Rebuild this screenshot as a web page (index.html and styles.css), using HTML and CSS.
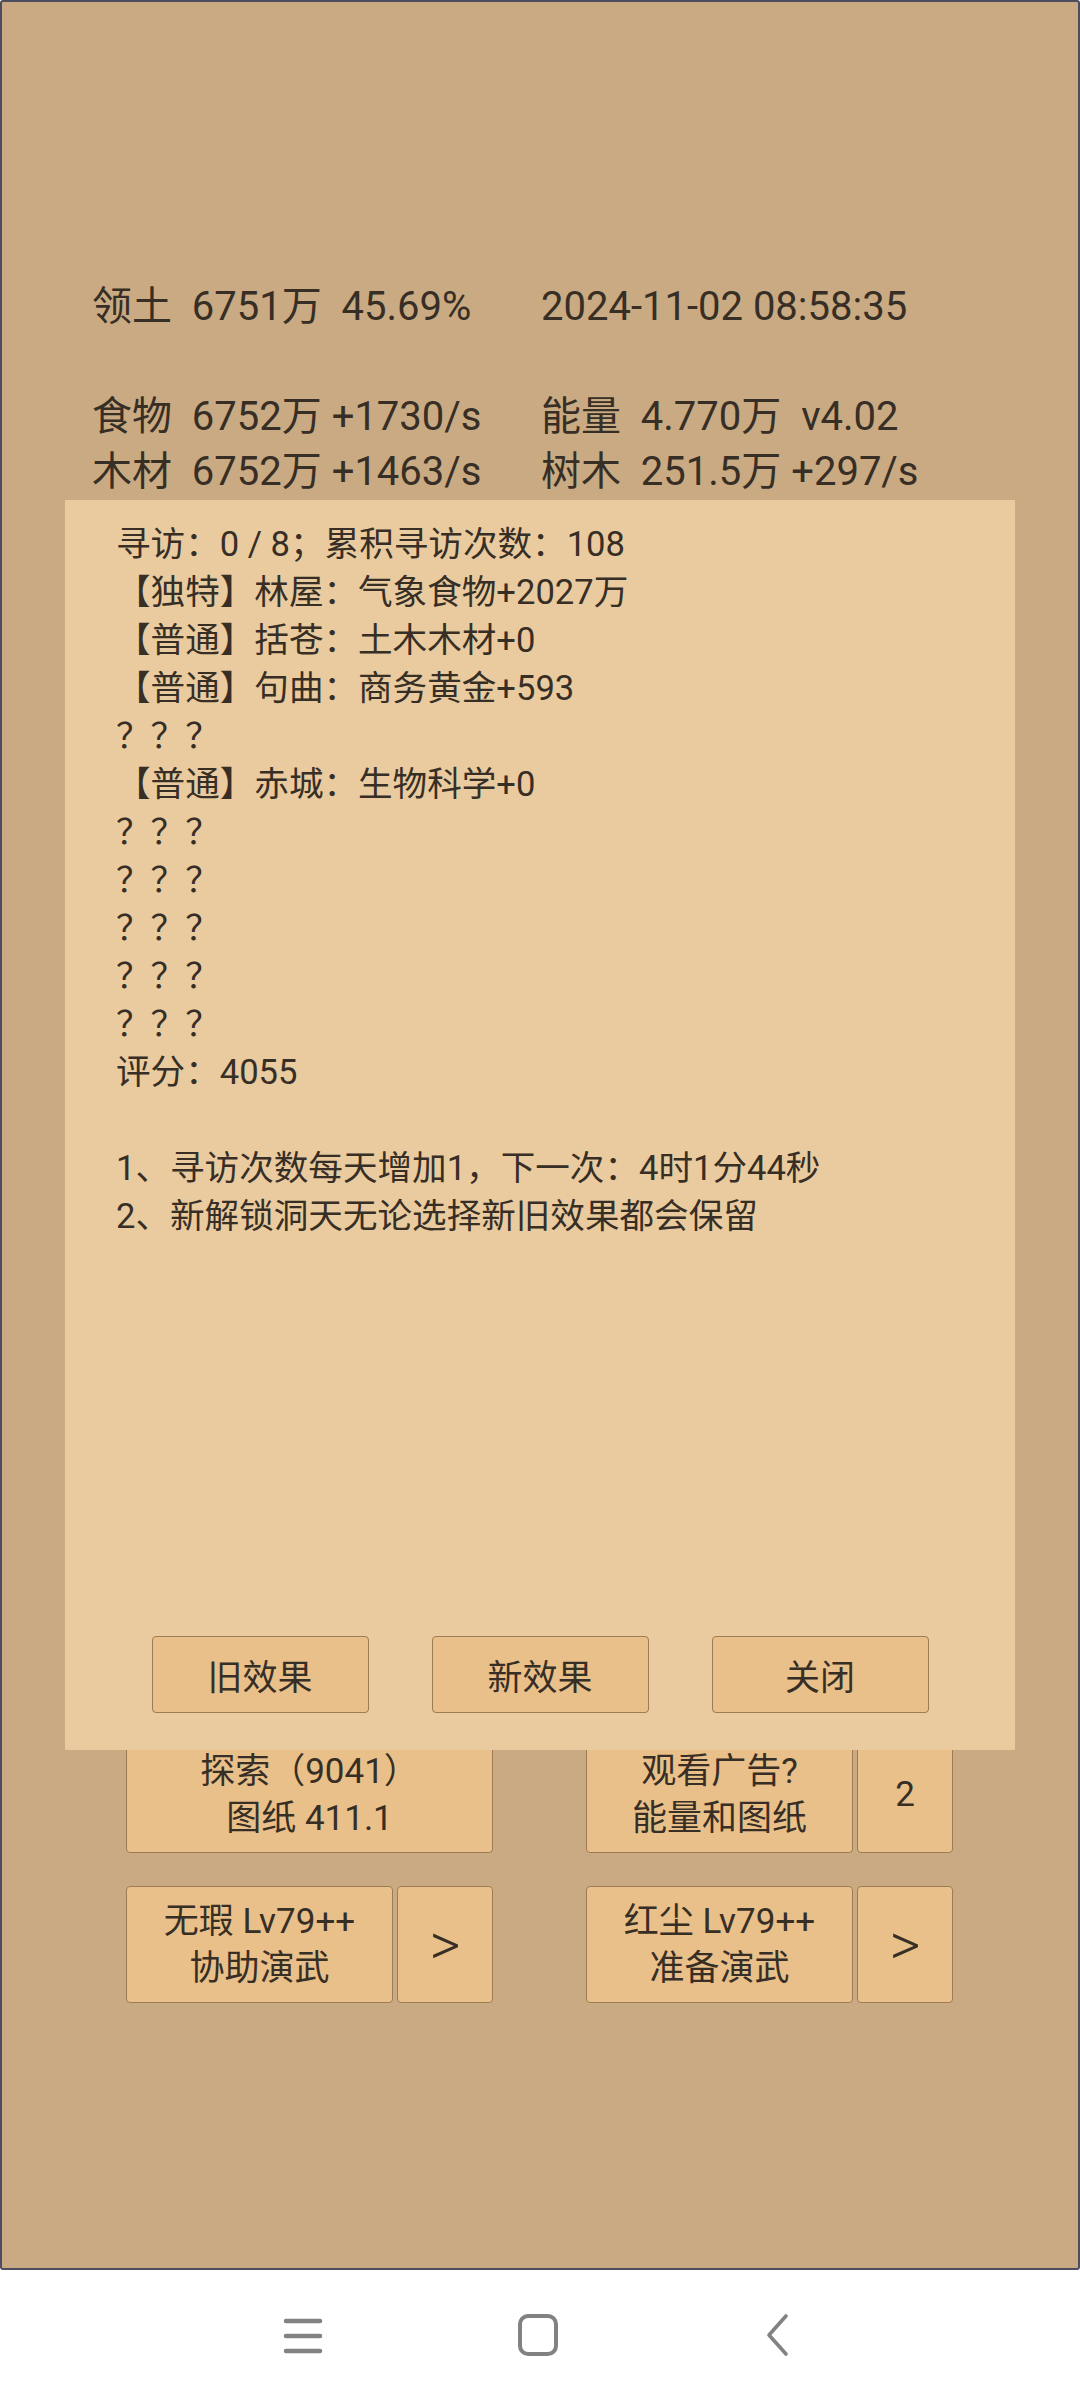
FILE: index.html
```html
<!DOCTYPE html>
<html lang="zh-CN">
<head>
<meta charset="utf-8">
<title>洞天寻访</title>
<link rel="stylesheet" href="styles.css">
</head>
<body>
<div class="screen">
  <div class="stats">
    <div class="cell">领土  6751万  45.69%</div>
    <div class="cell">2024-11-02 08:58:35</div>
    <div class="cell"> </div>
    <div class="cell"> </div>
    <div class="cell">食物  6752万 +1730/s</div>
    <div class="cell">能量  4.770万  v4.02</div>
    <div class="cell">木材  6752万 +1463/s</div>
    <div class="cell">树木  251.5万 +297/s</div>
  </div>

  <div class="actions">
    <div class="group">
      <button class="btn wide">探索（9041）<br>图纸 411.1</button>
    </div>
    <div class="group">
      <button class="btn main">观看广告?<br>能量和图纸</button>
      <button class="btn side">2</button>
    </div>
    <div class="group">
      <button class="btn main">无瑕 Lv79++<br>协助演武</button>
      <button class="btn side arrow">&gt;</button>
    </div>
    <div class="group">
      <button class="btn main">红尘 Lv79++<br>准备演武</button>
      <button class="btn side arrow">&gt;</button>
    </div>
  </div>

  <div class="dialog">
    <div class="dialog-text">寻访：0 / 8；累积寻访次数：108
【独特】林屋：气象食物+2027万
【普通】括苍：土木木材+0
【普通】句曲：商务黄金+593
？？？
【普通】赤城：生物科学+0
？？？
？？？
？？？
？？？
？？？
评分：4055

1、寻访次数每天增加1，下一次：4时1分44秒
2、新解锁洞天无论选择新旧效果都会保留</div>
    <div class="dialog-buttons">
      <button class="dbtn">旧效果</button>
      <button class="dbtn">新效果</button>
      <button class="dbtn">关闭</button>
    </div>
  </div>
</div>

<nav class="navbar">
  <svg class="nav-icon" width="40" height="40" viewBox="0 0 40 40" aria-label="菜单">
    <g stroke="#828282" stroke-width="4.5" stroke-linecap="round">
      <line x1="3" y1="6" x2="37" y2="6"/>
      <line x1="3" y1="21" x2="37" y2="21"/>
      <line x1="3" y1="36" x2="37" y2="36"/>
    </g>
  </svg>
  <svg class="nav-icon" width="44" height="44" viewBox="0 0 44 44" aria-label="主页">
    <rect x="4" y="3" width="36" height="38" rx="8" ry="8" fill="none" stroke="#828282" stroke-width="4"/>
  </svg>
  <svg class="nav-icon" width="30" height="44" viewBox="0 0 30 44" aria-label="返回">
    <polyline points="25,3 8,22 25,41" fill="none" stroke="#828282" stroke-width="3.6" stroke-linecap="round" stroke-linejoin="round"/>
  </svg>
</nav>
</body>
</html>
```

FILE: styles.css
```css
html, body {
  margin: 0;
  padding: 0;
  background: #ffffff;
}

body {
  width: 1080px;
  font-family: "Roboto", "Noto Sans CJK SC", sans-serif;
  color: #372e25;
}

.screen {
  position: relative;
  box-sizing: border-box;
  width: 1080px;
  height: 2270px;
  background: #c9aa82;
  border: 2px solid #4e4d60;
  border-radius: 3px;
  overflow: hidden;
}

.stats {
  display: grid;
  grid-template-columns: 449px 1fr;
  padding: 277px 0 0 90px;
  font-size: 40px;
  line-height: 55px;
}

.cell {
  white-space: pre;
  height: 55px;
}

.actions {
  display: grid;
  grid-template-columns: 367px 367px;
  column-gap: 93px;
  row-gap: 33px;
  margin: 1237px 0 0 124px;
}

.group {
  display: flex;
  gap: 4px;
  height: 117px;
}

.btn {
  box-sizing: border-box;
  height: 117px;
  margin: 0;
  padding: 0;
  background: #e9c089;
  border: 1.5px solid #9d7c52;
  border-radius: 4px;
  font-family: "Roboto", "Noto Sans CJK SC", sans-serif;
  font-size: 35px;
  line-height: 47px;
  color: #372e25;
  text-align: center;
}

.btn.wide {
  width: 367px;
}

.btn.main {
  width: 267px;
}

.btn.side {
  width: 96px;
}

.btn.arrow {
  font-size: 60px;
  font-weight: 300;
}

.dialog {
  position: absolute;
  left: 63px;
  top: 498px;
  width: 950px;
  height: 1250px;
  box-sizing: border-box;
  background: #e9cb9f;
  display: flex;
  flex-direction: column;
  justify-content: space-between;
  padding: 20px 0 37px 51px;
}

.dialog-text {
  white-space: pre;
  font-size: 34.6px;
  line-height: 48px;
}

.dialog-buttons {
  display: flex;
  justify-content: center;
  gap: 63px;
  margin-left: -51px;
}

.dbtn {
  box-sizing: border-box;
  width: 217px;
  height: 77px;
  margin: 0;
  padding: 0;
  background: #e9c089;
  border: 1.5px solid #9d7c52;
  border-radius: 4px;
  font-family: "Roboto", "Noto Sans CJK SC", sans-serif;
  font-size: 35px;
  color: #372e25;
}

.navbar {
  height: 130px;
  box-sizing: border-box;
  padding-right: 6px;
  display: flex;
  align-items: center;
  justify-content: center;
  background: #ffffff;
}

.nav-icon {
  display: block;
}

.nav-icon:nth-child(1) {
  margin-right: 193px;
}

.nav-icon:nth-child(2) {
  margin-right: 201px;
}
```
